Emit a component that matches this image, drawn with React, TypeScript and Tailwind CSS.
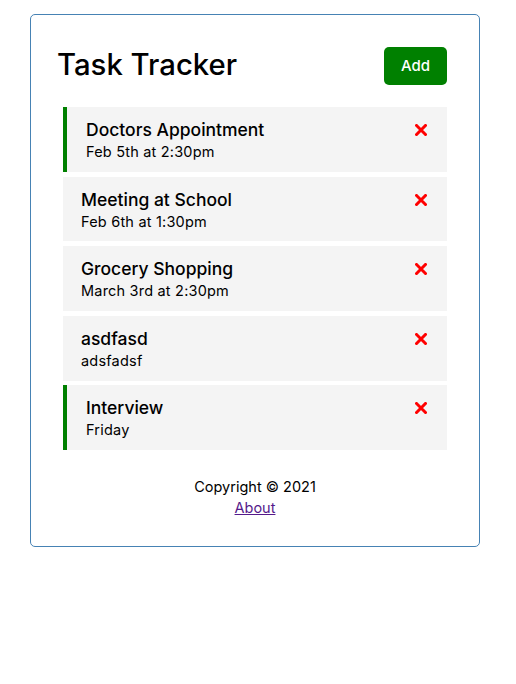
import React from "react";

type Task = { id: number; text: string; day: string; reminder: boolean };

const tasks: Task[] = [
  { id: 1, text: "Doctors Appointment", day: "Feb 5th at 2:30pm", reminder: true },
  { id: 2, text: "Meeting at School", day: "Feb 6th at 1:30pm", reminder: false },
  { id: 3, text: "Grocery Shopping", day: "March 3rd at 2:30pm", reminder: false },
  { id: 4, text: "asdfasd", day: "adsfadsf", reminder: false },
  { id: 5, text: "Interview", day: "Friday", reminder: true },
];

function XIcon() {
  return (
    <svg width="12" height="12" viewBox="0 0 12 12" className="block">
      <path d="M1.5 1.5 L10.5 10.5 M10.5 1.5 L1.5 10.5" stroke="#ff0000" strokeWidth="3" strokeLinecap="square" />
    </svg>
  );
}

export default function App() {
  return (
    <div className="pt-[14px] pl-[30px] bg-white min-h-[684px]" style={{ fontFamily: "Inter, 'Open Sans', sans-serif" }}>
      <div className="w-[450px] h-[533px] border border-[#4682b4] rounded-[5px] px-[32px] pt-[32px] flex flex-col text-black">
        <header className="flex items-center justify-between h-[38px]">
          <h1 className="text-[29.3px] font-medium ml-[-6px] leading-none mt-[-2px]">Task Tracker</h1>
          <button className="w-[63px] h-[38px] bg-[#008000] text-white rounded-[5px] text-[15px] font-medium">Add</button>
        </header>
        <div className="mt-[22px] flex flex-col gap-[4.8px]">
          {tasks.map((t) => (
            <div
              key={t.id}
              className={`h-[64.8px] bg-[#f4f4f4] flex ${t.reminder ? "border-l-[4px] border-[#008000] pl-[19px]" : "pl-[18px]"} pr-[20px]`}
            >
              <div className="flex-1 flex flex-col pt-[12px]">
                <div className="flex items-center justify-between">
                  <h3 className="text-[17.5px] font-medium leading-[22px]">{t.text}</h3>
                  <XIcon />
                </div>
                <p className="text-[14.5px] leading-[22px] tracking-[0.2px]">{t.day}</p>
              </div>
            </div>
          ))}
        </div>
        <footer className="mt-[26px] text-center text-[14.5px] leading-[21px]">
          <p>Copyright © 2021</p>
          <a href="#" className="text-[#551a8b] underline">About</a>
        </footer>
      </div>
    </div>
  );
}
